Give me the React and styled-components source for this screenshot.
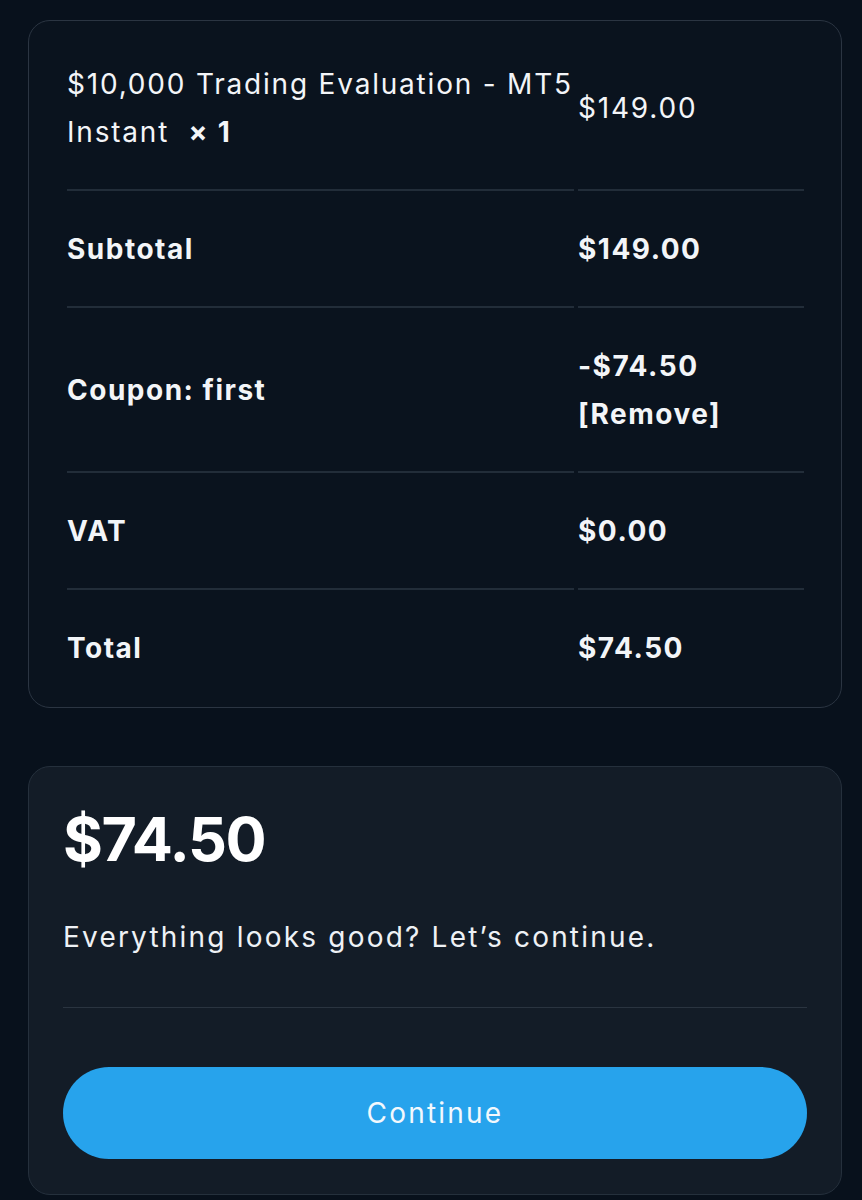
import React from "react";
import styled, { createGlobalStyle } from "styled-components";

const GlobalStyle = createGlobalStyle`
  body {
    margin: 0;
    background: #08111c;
    font-family: Inter, "Noto Sans", "Liberation Sans", sans-serif;
    color: #f3f5f8;
  }
`;

const Page = styled.div`
  min-height: 1200px;
  box-sizing: border-box;
  padding: 20px 20px 0 28px;
  display: flex;
  flex-direction: column;
  gap: 58px;
`;

const ReviewCard = styled.div`
  border: 1px solid #2b3542;
  border-radius: 22px;
  background: #0a131e;
  padding: 5px 37px 2px 38px;
`;

const Table = styled.table`
  border-collapse: separate;
  border-spacing: 4px 0;
  margin: 0 -4px;
  width: calc(100% + 8px);
`;

const Row = styled.tr`
  td {
    border-bottom: ${(p) => (p.$last ? "none" : "2px solid #222d39")};
  }
`;

const Cell = styled.td`
  padding: 34px 0 33px;
  vertical-align: middle;
  font-size: 28px;
  line-height: 48px;
  font-weight: ${(p) => (p.$bold ? 700 : 400)};
  letter-spacing: ${(p) => (p.$bold ? "1.5px" : "1.8px")};
  width: ${(p) => (p.$value ? "226px" : "auto")};
  white-space: ${(p) => (p.$value ? "nowrap" : "normal")};
`;

const Title = styled.span`
  white-space: nowrap;
`;

const Qty = styled.strong`
  font-weight: 700;
`;

const RemoveLink = styled.a`
  display: block;
  color: inherit;
  text-decoration: none;
  cursor: pointer;
`;

const SummaryCard = styled.div`
  border: 1px solid #25303c;
  border-radius: 22px;
  background: #131c27;
  padding: 32px 34px 35px 34px;
  display: flex;
  flex-direction: column;
`;

const BigPrice = styled.div`
  font-size: 61px;
  font-weight: 700;
  line-height: 80px;
  letter-spacing: -1.5px;
  color: #ffffff;
`;

const Note = styled.p`
  margin: 36px 0 0;
  font-size: 28px;
  line-height: 44px;
  font-weight: 400;
  letter-spacing: 2.2px;
  color: #eef1f5;
  padding-bottom: 48px;
  border-bottom: 1px solid #2a3440;
`;

const Button = styled.button`
  margin-top: 59px;
  height: 92px;
  border: none;
  border-radius: 46px;
  background: #27a3ec;
  color: #f2f8fd;
  font-family: inherit;
  font-size: 28px;
  font-weight: 400;
  letter-spacing: 2.2px;
  cursor: pointer;
`;

const rows = [
  { label: "Subtotal", value: "$149.00" },
  {
    label: "Coupon: first",
    value: (
      <>
        -$74.50
        <RemoveLink>[Remove]</RemoveLink>
      </>
    ),
  },
  { label: "VAT", value: "$0.00" },
  { label: "Total", value: "$74.50" },
];

export default function App() {
  return (
    <>
      <GlobalStyle />
      <Page>
        <ReviewCard>
          <Table>
            <tbody>
              <Row>
                <Cell>
                  <Title>$10,000 Trading Evaluation - MT5</Title> Instant&nbsp;{" "}
                  <Qty>× 1</Qty>
                </Cell>
                <Cell $value>$149.00</Cell>
              </Row>
              {rows.map((r, i) => (
                <Row key={r.label} $last={i === rows.length - 1}>
                  <Cell $bold>{r.label}</Cell>
                  <Cell $bold $value>
                    {r.value}
                  </Cell>
                </Row>
              ))}
            </tbody>
          </Table>
        </ReviewCard>
        <SummaryCard>
          <BigPrice>$74.50</BigPrice>
          <Note>Everything looks good? Let’s continue.</Note>
          <Button>Continue</Button>
        </SummaryCard>
      </Page>
    </>
  );
}
